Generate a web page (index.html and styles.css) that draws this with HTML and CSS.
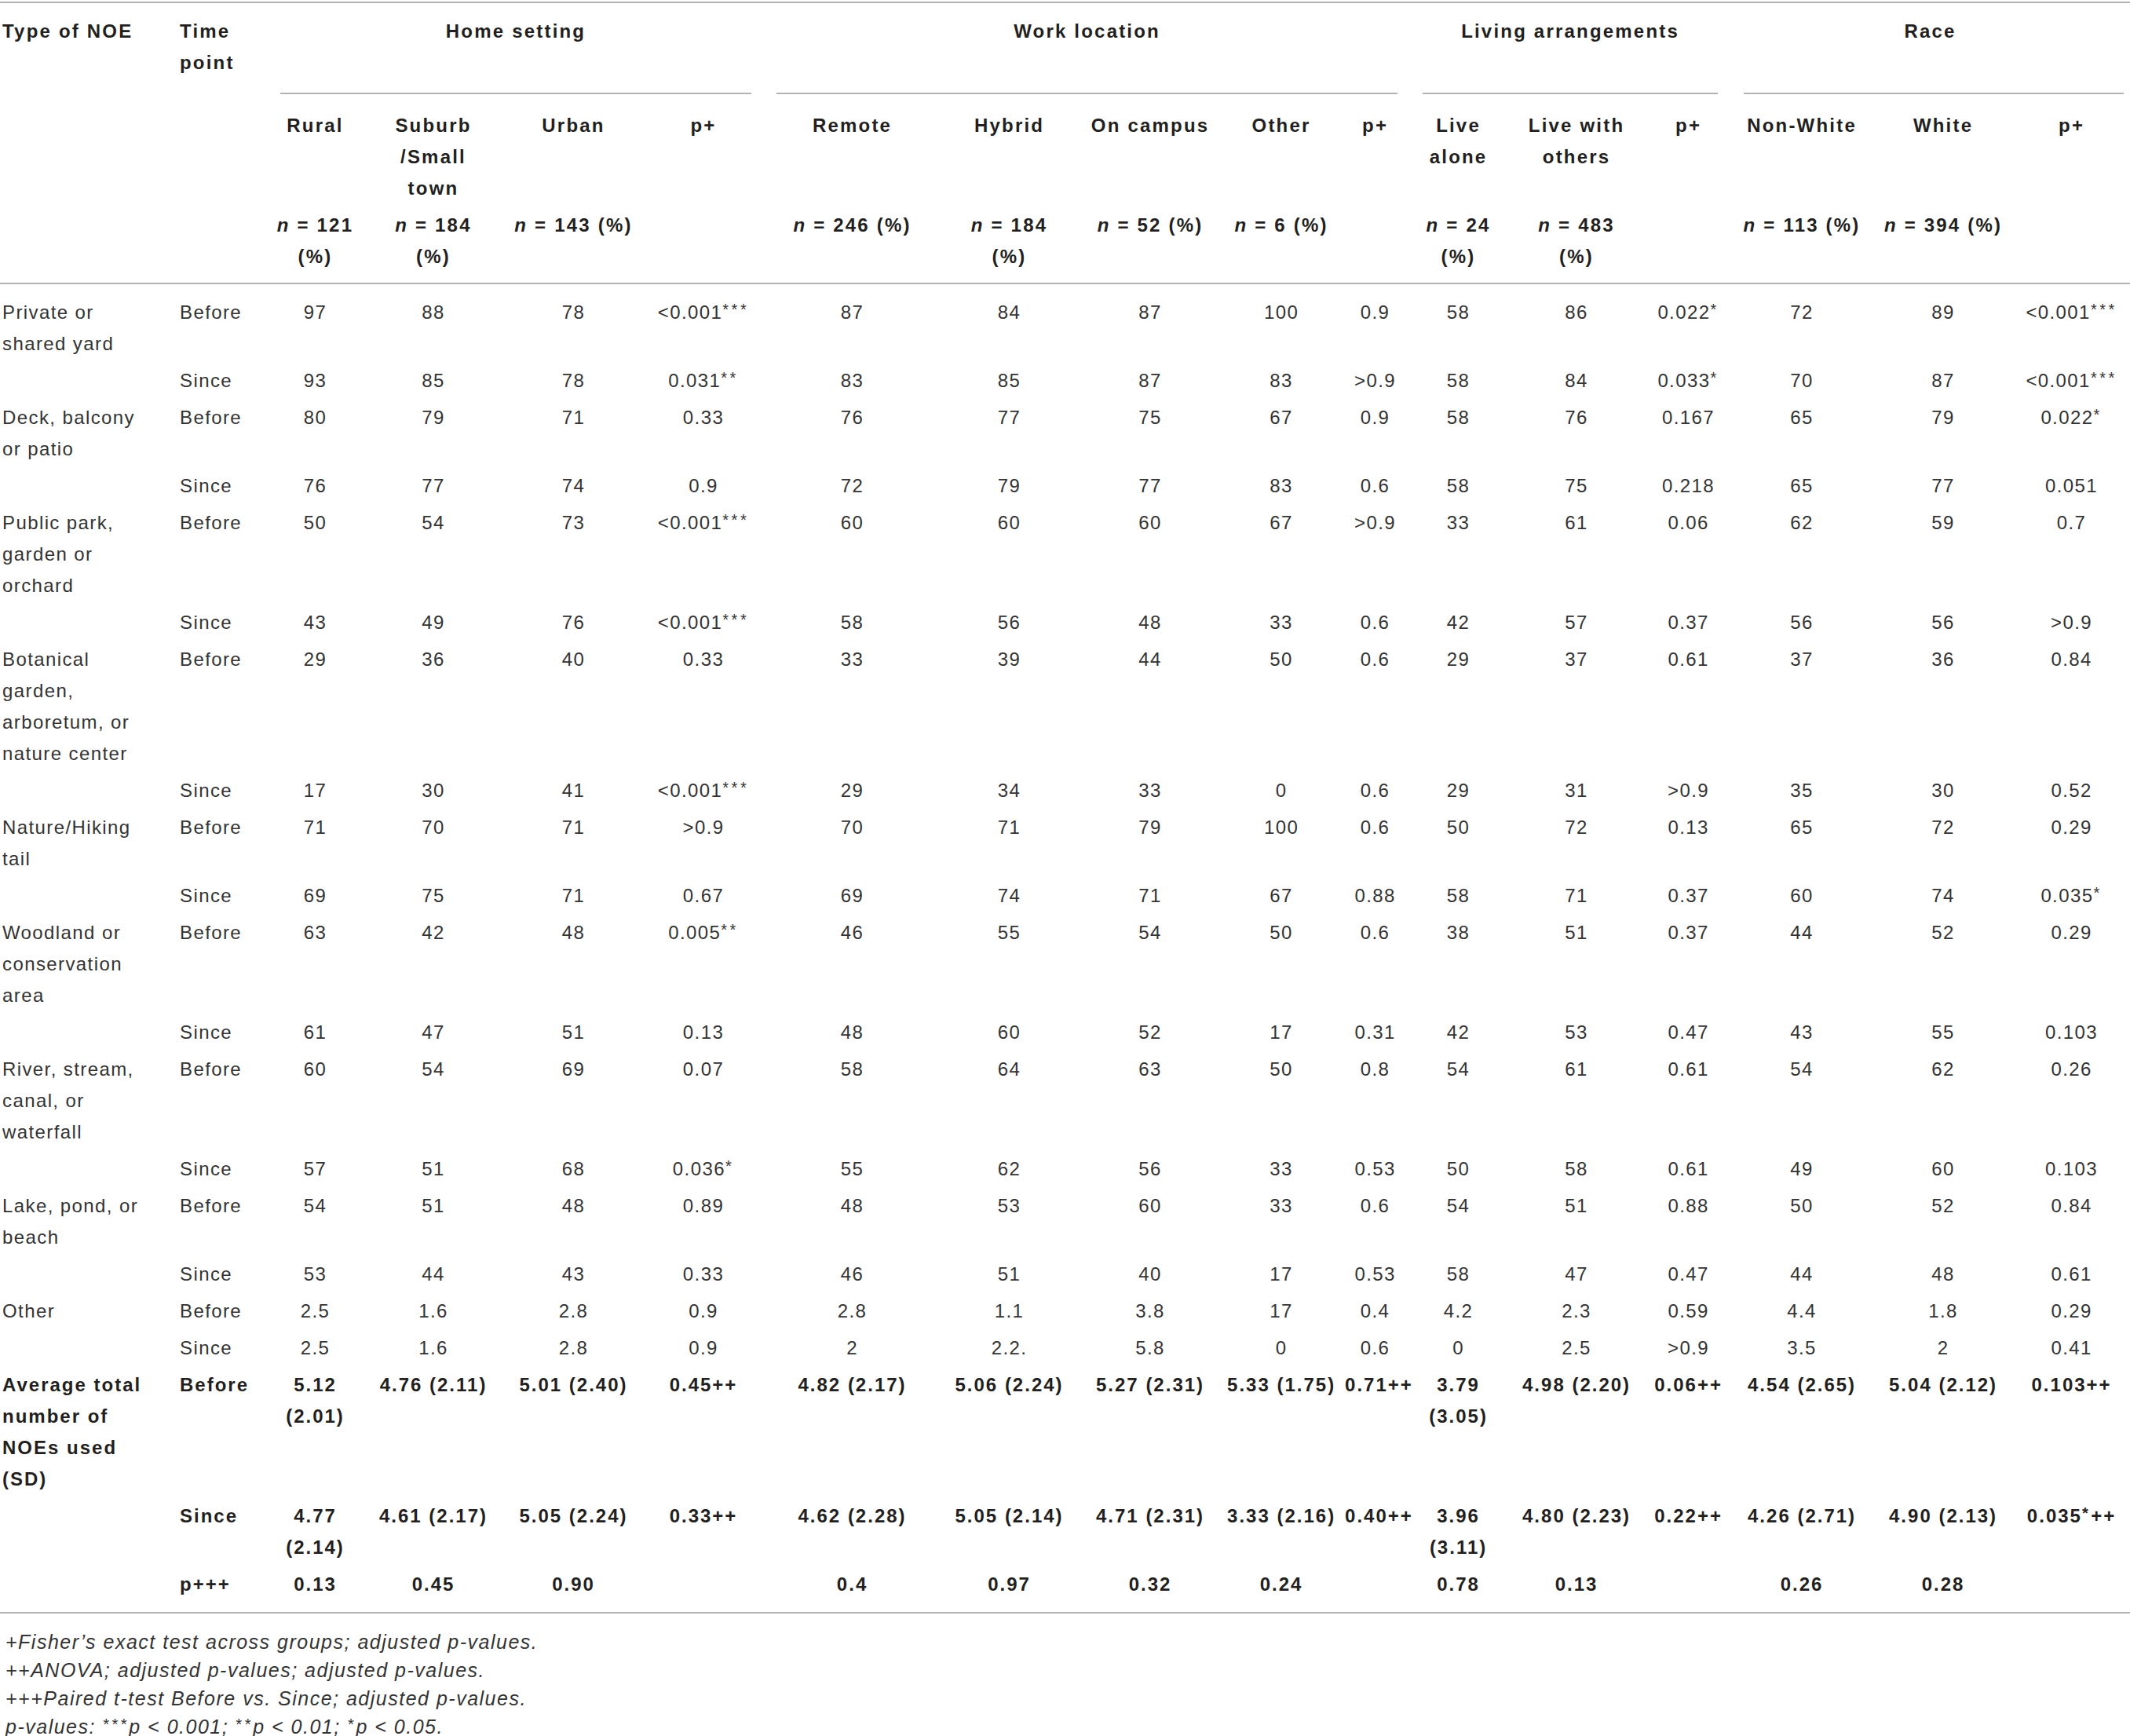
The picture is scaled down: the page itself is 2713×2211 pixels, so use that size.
FILE: index.html
```html
<!DOCTYPE html>
<html lang="en">
<head>
    <meta charset="UTF-8">
    <title>Use of NOEs before and since the pandemic</title>
    <link rel="stylesheet" href="styles.css">
</head>
<body>

    <table class="noe-table">
        <colgroup>
            <col style="width: 223px">
            <col style="width: 118px">
            <col style="width: 121px">
            <col style="width: 180px">
            <col style="width: 177px">
            <col style="width: 154px">
            <col style="width: 225px">
            <col style="width: 175px">
            <col style="width: 184px">
            <col style="width: 150px">
            <col style="width: 89px">
            <col style="width: 123px">
            <col style="width: 178px">
            <col style="width: 107px">
            <col style="width: 182px">
            <col style="width: 178px">
            <col style="width: 149px">
        </colgroup>
        <thead>
            <tr class="head-1">
                <th class="lbl">Type of NOE</th>
                <th class="tp">Time<br>point</th>
                <th class="group" colspan="4">Home setting</th>
                <th class="group" colspan="5">Work location</th>
                <th class="group" colspan="3">Living arrangements</th>
                <th class="group last" colspan="3">Race</th>
            </tr>
            <tr class="head-2">
                <th class="lbl"></th>
                <th class="tp"></th>
                <th>Rural</th>
                <th>Suburb<br>/Small<br>town</th>
                <th>Urban</th>
                <th>p+</th>
                <th>Remote</th>
                <th>Hybrid</th>
                <th>On campus</th>
                <th>Other</th>
                <th>p+</th>
                <th>Live<br>alone</th>
                <th>Live with<br>others</th>
                <th>p+</th>
                <th>Non-White</th>
                <th>White</th>
                <th>p+</th>
            </tr>
            <tr class="head-3">
                <th class="lbl"></th>
                <th class="tp"></th>
                <th><i>n</i> = 121<br>(%)</th>
                <th><i>n</i> = 184<br>(%)</th>
                <th><i>n</i> = 143 (%)</th>
                <th></th>
                <th><i>n</i> = 246 (%)</th>
                <th><i>n</i> = 184<br>(%)</th>
                <th><i>n</i> = 52 (%)</th>
                <th><i>n</i> = 6 (%)</th>
                <th></th>
                <th><i>n</i> = 24<br>(%)</th>
                <th><i>n</i> = 483<br>(%)</th>
                <th></th>
                <th><i>n</i> = 113 (%)</th>
                <th><i>n</i> = 394 (%)</th>
                <th></th>
            </tr>
        </thead>
        <tbody>
            <tr class="first">
                <td class="lbl">Private or<br>shared yard</td><td class="tp">Before</td>
                <td>97</td><td>88</td><td>78</td><td>&lt;0.001<sup class="sig">***</sup></td>
                <td>87</td><td>84</td><td>87</td><td>100</td><td>0.9</td>
                <td>58</td><td>86</td><td>0.022<sup class="sig">*</sup></td>
                <td>72</td><td>89</td><td>&lt;0.001<sup class="sig">***</sup></td>
            </tr>
            <tr>
                <td class="lbl"></td><td class="tp">Since</td>
                <td>93</td><td>85</td><td>78</td><td>0.031<sup class="sig">**</sup></td>
                <td>83</td><td>85</td><td>87</td><td>83</td><td>&gt;0.9</td>
                <td>58</td><td>84</td><td>0.033<sup class="sig">*</sup></td>
                <td>70</td><td>87</td><td>&lt;0.001<sup class="sig">***</sup></td>
            </tr>
            <tr>
                <td class="lbl">Deck, balcony<br>or patio</td><td class="tp">Before</td>
                <td>80</td><td>79</td><td>71</td><td>0.33</td>
                <td>76</td><td>77</td><td>75</td><td>67</td><td>0.9</td>
                <td>58</td><td>76</td><td>0.167</td>
                <td>65</td><td>79</td><td>0.022<sup class="sig">*</sup></td>
            </tr>
            <tr>
                <td class="lbl"></td><td class="tp">Since</td>
                <td>76</td><td>77</td><td>74</td><td>0.9</td>
                <td>72</td><td>79</td><td>77</td><td>83</td><td>0.6</td>
                <td>58</td><td>75</td><td>0.218</td>
                <td>65</td><td>77</td><td>0.051</td>
            </tr>
            <tr>
                <td class="lbl">Public park,<br>garden or<br>orchard</td><td class="tp">Before</td>
                <td>50</td><td>54</td><td>73</td><td>&lt;0.001<sup class="sig">***</sup></td>
                <td>60</td><td>60</td><td>60</td><td>67</td><td>&gt;0.9</td>
                <td>33</td><td>61</td><td>0.06</td>
                <td>62</td><td>59</td><td>0.7</td>
            </tr>
            <tr>
                <td class="lbl"></td><td class="tp">Since</td>
                <td>43</td><td>49</td><td>76</td><td>&lt;0.001<sup class="sig">***</sup></td>
                <td>58</td><td>56</td><td>48</td><td>33</td><td>0.6</td>
                <td>42</td><td>57</td><td>0.37</td>
                <td>56</td><td>56</td><td>&gt;0.9</td>
            </tr>
            <tr>
                <td class="lbl">Botanical<br>garden,<br>arboretum, or<br>nature center</td><td class="tp">Before</td>
                <td>29</td><td>36</td><td>40</td><td>0.33</td>
                <td>33</td><td>39</td><td>44</td><td>50</td><td>0.6</td>
                <td>29</td><td>37</td><td>0.61</td>
                <td>37</td><td>36</td><td>0.84</td>
            </tr>
            <tr>
                <td class="lbl"></td><td class="tp">Since</td>
                <td>17</td><td>30</td><td>41</td><td>&lt;0.001<sup class="sig">***</sup></td>
                <td>29</td><td>34</td><td>33</td><td>0</td><td>0.6</td>
                <td>29</td><td>31</td><td>&gt;0.9</td>
                <td>35</td><td>30</td><td>0.52</td>
            </tr>
            <tr>
                <td class="lbl">Nature/Hiking<br>tail</td><td class="tp">Before</td>
                <td>71</td><td>70</td><td>71</td><td>&gt;0.9</td>
                <td>70</td><td>71</td><td>79</td><td>100</td><td>0.6</td>
                <td>50</td><td>72</td><td>0.13</td>
                <td>65</td><td>72</td><td>0.29</td>
            </tr>
            <tr>
                <td class="lbl"></td><td class="tp">Since</td>
                <td>69</td><td>75</td><td>71</td><td>0.67</td>
                <td>69</td><td>74</td><td>71</td><td>67</td><td>0.88</td>
                <td>58</td><td>71</td><td>0.37</td>
                <td>60</td><td>74</td><td>0.035<sup class="sig">*</sup></td>
            </tr>
            <tr>
                <td class="lbl">Woodland or<br>conservation<br>area</td><td class="tp">Before</td>
                <td>63</td><td>42</td><td>48</td><td>0.005<sup class="sig">**</sup></td>
                <td>46</td><td>55</td><td>54</td><td>50</td><td>0.6</td>
                <td>38</td><td>51</td><td>0.37</td>
                <td>44</td><td>52</td><td>0.29</td>
            </tr>
            <tr>
                <td class="lbl"></td><td class="tp">Since</td>
                <td>61</td><td>47</td><td>51</td><td>0.13</td>
                <td>48</td><td>60</td><td>52</td><td>17</td><td>0.31</td>
                <td>42</td><td>53</td><td>0.47</td>
                <td>43</td><td>55</td><td>0.103</td>
            </tr>
            <tr>
                <td class="lbl">River, stream,<br>canal, or<br>waterfall</td><td class="tp">Before</td>
                <td>60</td><td>54</td><td>69</td><td>0.07</td>
                <td>58</td><td>64</td><td>63</td><td>50</td><td>0.8</td>
                <td>54</td><td>61</td><td>0.61</td>
                <td>54</td><td>62</td><td>0.26</td>
            </tr>
            <tr>
                <td class="lbl"></td><td class="tp">Since</td>
                <td>57</td><td>51</td><td>68</td><td>0.036<sup class="sig">*</sup></td>
                <td>55</td><td>62</td><td>56</td><td>33</td><td>0.53</td>
                <td>50</td><td>58</td><td>0.61</td>
                <td>49</td><td>60</td><td>0.103</td>
            </tr>
            <tr>
                <td class="lbl">Lake, pond, or<br>beach</td><td class="tp">Before</td>
                <td>54</td><td>51</td><td>48</td><td>0.89</td>
                <td>48</td><td>53</td><td>60</td><td>33</td><td>0.6</td>
                <td>54</td><td>51</td><td>0.88</td>
                <td>50</td><td>52</td><td>0.84</td>
            </tr>
            <tr>
                <td class="lbl"></td><td class="tp">Since</td>
                <td>53</td><td>44</td><td>43</td><td>0.33</td>
                <td>46</td><td>51</td><td>40</td><td>17</td><td>0.53</td>
                <td>58</td><td>47</td><td>0.47</td>
                <td>44</td><td>48</td><td>0.61</td>
            </tr>
            <tr>
                <td class="lbl">Other</td><td class="tp">Before</td>
                <td>2.5</td><td>1.6</td><td>2.8</td><td>0.9</td>
                <td>2.8</td><td>1.1</td><td>3.8</td><td>17</td><td>0.4</td>
                <td>4.2</td><td>2.3</td><td>0.59</td>
                <td>4.4</td><td>1.8</td><td>0.29</td>
            </tr>
            <tr>
                <td class="lbl"></td><td class="tp">Since</td>
                <td>2.5</td><td>1.6</td><td>2.8</td><td>0.9</td>
                <td>2</td><td>2.2.</td><td>5.8</td><td>0</td><td>0.6</td>
                <td>0</td><td>2.5</td><td>&gt;0.9</td>
                <td>3.5</td><td>2</td><td>0.41</td>
            </tr>
            <tr class="avg">
                <td class="lbl">Average total<br>number of<br>NOEs used<br>(SD)</td><td class="tp">Before</td>
                <td>5.12<br>(2.01)</td><td>4.76 (2.11)</td><td>5.01 (2.40)</td><td>0.45++</td>
                <td>4.82 (2.17)</td><td>5.06 (2.24)</td><td>5.27 (2.31)</td><td>5.33 (1.75)</td><td>0.71++</td>
                <td>3.79<br>(3.05)</td><td>4.98 (2.20)</td><td>0.06++</td>
                <td>4.54 (2.65)</td><td>5.04 (2.12)</td><td>0.103++</td>
            </tr>
            <tr class="avg">
                <td class="lbl"></td><td class="tp">Since</td>
                <td>4.77<br>(2.14)</td><td>4.61 (2.17)</td><td>5.05 (2.24)</td><td>0.33++</td>
                <td>4.62 (2.28)</td><td>5.05 (2.14)</td><td>4.71 (2.31)</td><td>3.33 (2.16)</td><td>0.40++</td>
                <td>3.96<br>(3.11)</td><td>4.80 (2.23)</td><td>0.22++</td>
                <td>4.26 (2.71)</td><td>4.90 (2.13)</td><td>0.035<sup class="sig">*</sup>++</td>
            </tr>
            <tr class="avg last">
                <td class="lbl"></td><td class="tp">p+++</td>
                <td>0.13</td><td>0.45</td><td>0.90</td><td></td>
                <td>0.4</td><td>0.97</td><td>0.32</td><td>0.24</td><td></td>
                <td>0.78</td><td>0.13</td><td></td>
                <td>0.26</td><td>0.28</td><td></td>
            </tr>
        </tbody>
    </table>

    <div class="notes">
        <p>+Fisher’s exact test across groups; adjusted p-values.</p>
        <p>++ANOVA; adjusted p-values; adjusted p-values.</p>
        <p>+++Paired t-test Before vs. Since; adjusted p-values.</p>
        <p>p-values: <sup class="sig">***</sup>p &lt; 0.001; <sup class="sig">**</sup>p &lt; 0.01; <sup class="sig">*</sup>p &lt; 0.05.</p>
    </div>

</body>
</html>
```

FILE: styles.css
```css
/* General */
body {
    margin: 0;
    padding-top: 2px;
    font-family: "Liberation Sans", Arial, sans-serif;
    color: #333;
    background-color: #fff;
}

/* Table */
.noe-table {
    width: 2713px;
    table-layout: fixed;
    border-collapse: separate;
    border-spacing: 0;
    border-top: 2px solid #b3b3b3;
    font-size: 24px;
    line-height: 40px;
    letter-spacing: 1.4px;
}

.noe-table th,
.noe-table td {
    padding: 3.5px 6px;
    text-align: center;
    vertical-align: top;
    white-space: nowrap;
}

.noe-table th {
    font-weight: bold;
    letter-spacing: 2.2px;
    color: #231f20;
}

.noe-table .lbl {
    text-align: left;
    padding-left: 3px;
}

.noe-table .tp {
    text-align: left;
    padding-left: 6px;
}

/* Header rows */
.head-1 th {
    padding-top: 16px;
    padding-bottom: 20px;
}

.head-1 .group {
    background: linear-gradient(#b3b3b3, #b3b3b3) no-repeat center bottom / calc(100% - 32px) 2px;
}

.head-1 .group.last {
    background-position: right 8px bottom;
    background-size: calc(100% - 25px) 2px;
}

.head-2 th {
    padding-top: 20px;
    padding-bottom: 3.3px;
}

.head-3 th {
    padding-top: 3.4px;
    padding-bottom: 13.3px;
    border-bottom: 2px solid #b3b3b3;
}

/* Body rows */
.first td {
    padding-top: 16.4px;
}

.avg td {
    font-weight: bold;
    letter-spacing: 2px;
    color: #231f20;
}

.last td {
    padding-bottom: 14.3px;
    border-bottom: 2px solid #b3b3b3;
}

.sig {
    font-size: 20px;
    line-height: 1;
    vertical-align: 5px;
    letter-spacing: 3.5px;
}

/* Footnotes */
.notes {
    padding: 18px 0 0 7px;
    font-size: 25px;
    line-height: 36px;
    font-style: italic;
    letter-spacing: 1.5px;
}

.notes p {
    margin: 0;
}
```
